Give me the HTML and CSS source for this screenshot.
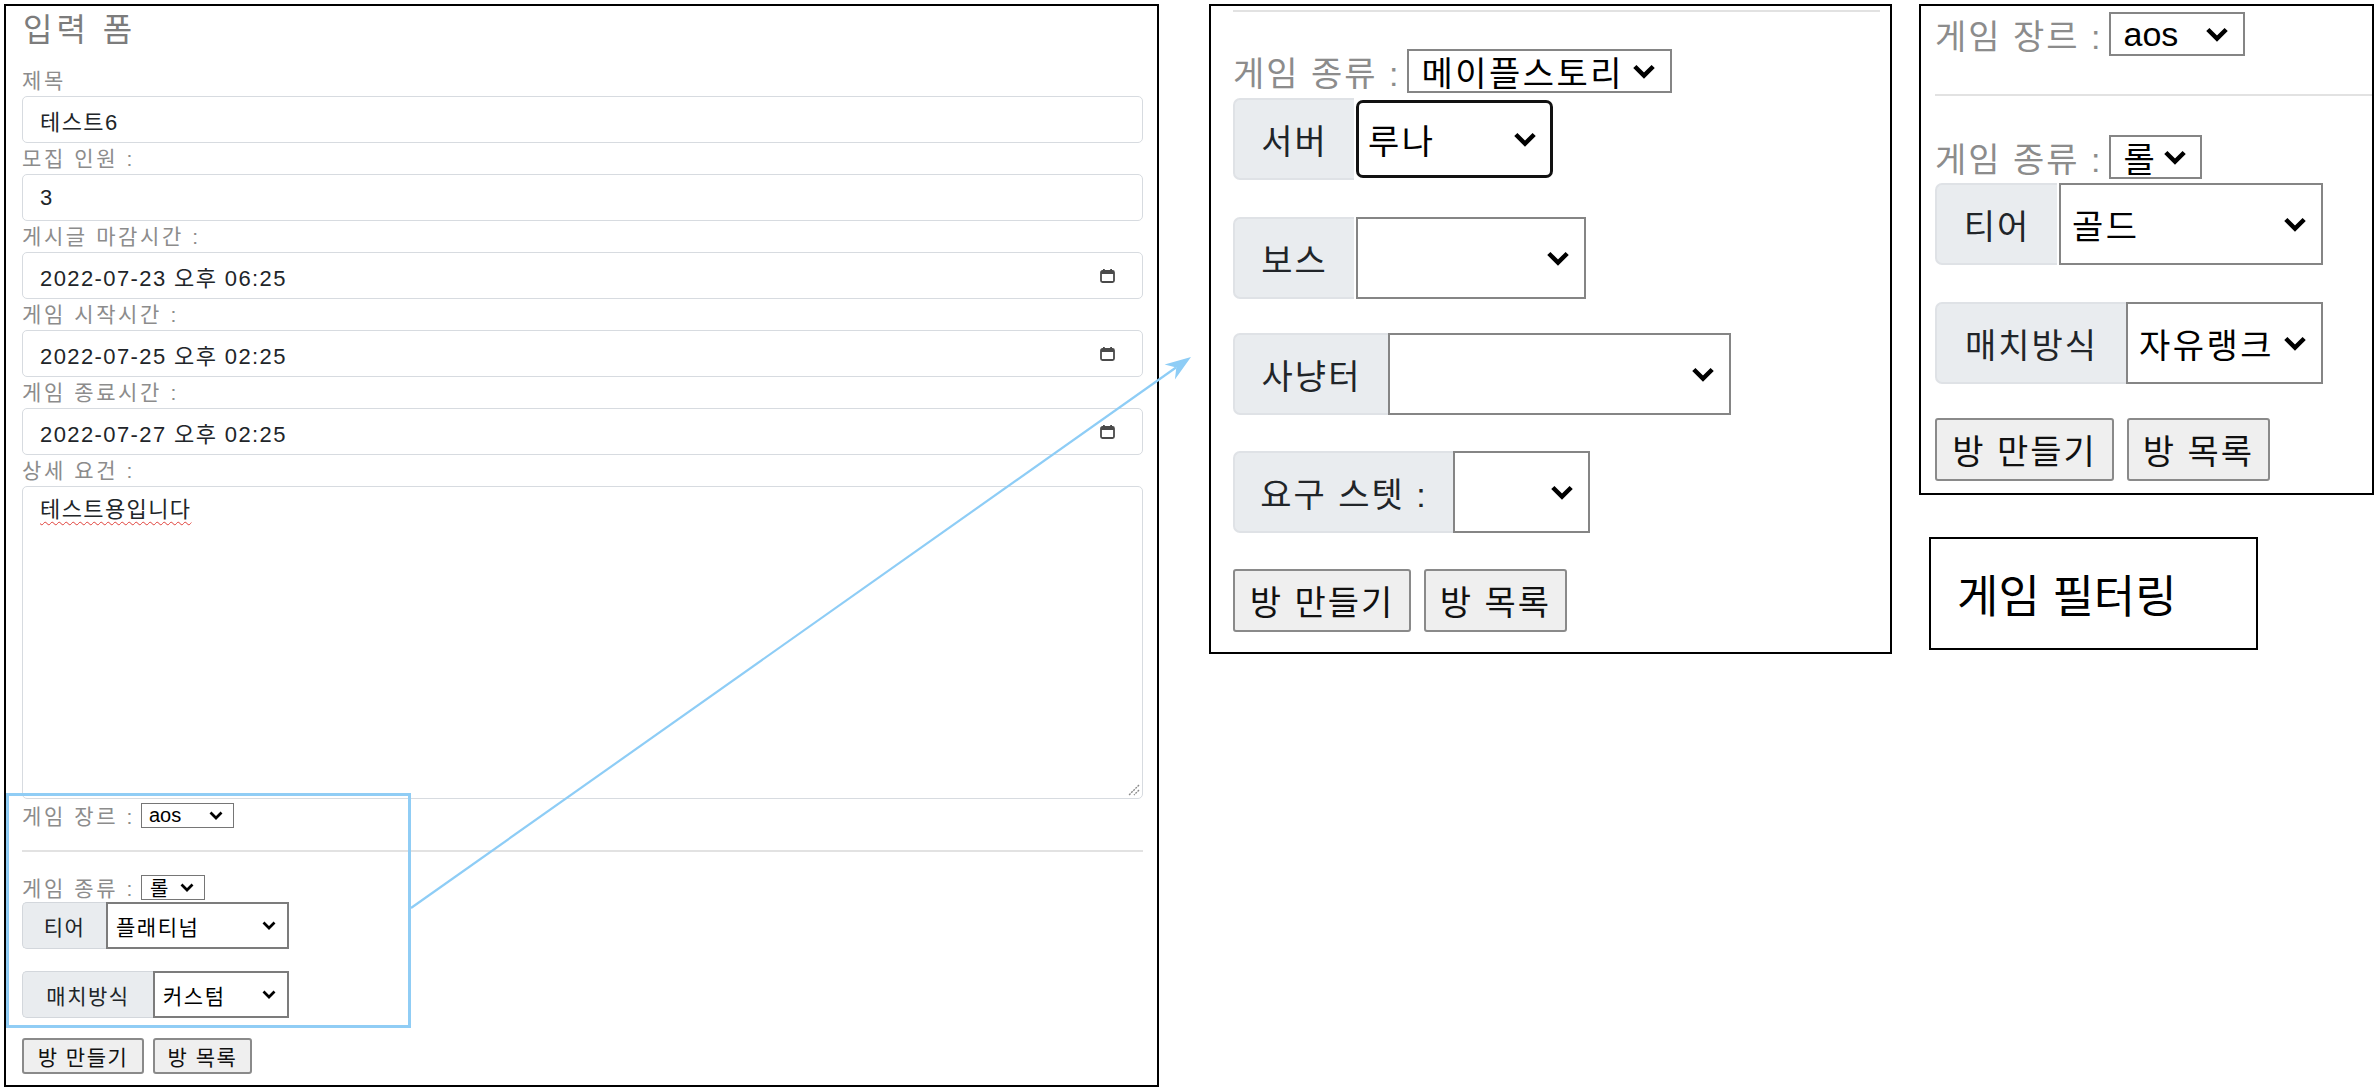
FILE: index.html
```html
<!DOCTYPE html>
<html lang="ko">
<head>
<meta charset="utf-8">
<title>입력 폼</title>
<link rel="stylesheet" href="styles.css">
</head>
<body>
<div class="page">
  <section class="panel form-panel">
    <h1 class="title">입력 폼</h1>
    <div class="field-label">제목</div>
    <div class="input">테스트6</div>
    <div class="field-label">모집 인원 :</div>
    <div class="input">3</div>
    <div class="field-label">게시글 마감시간 :</div>
    <div class="input date"><span>2022-07-23 오후 06:25</span><svg class="cal" viewBox="0 0 17 16"><rect x="2" y="3" width="13" height="11" rx="1.5" fill="none" stroke="#4a4a4a" stroke-width="1.8"/><rect x="2" y="3" width="13" height="3" fill="#4a4a4a"/><rect x="4" y="1" width="1.8" height="3" fill="#4a4a4a"/><rect x="11.2" y="1" width="1.8" height="3" fill="#4a4a4a"/></svg></div>
    <div class="field-label">게임 시작시간 :</div>
    <div class="input date"><span>2022-07-25 오후 02:25</span><svg class="cal" viewBox="0 0 17 16"><rect x="2" y="3" width="13" height="11" rx="1.5" fill="none" stroke="#4a4a4a" stroke-width="1.8"/><rect x="2" y="3" width="13" height="3" fill="#4a4a4a"/><rect x="4" y="1" width="1.8" height="3" fill="#4a4a4a"/><rect x="11.2" y="1" width="1.8" height="3" fill="#4a4a4a"/></svg></div>
    <div class="field-label">게임 종료시간 :</div>
    <div class="input date"><span>2022-07-27 오후 02:25</span><svg class="cal" viewBox="0 0 17 16"><rect x="2" y="3" width="13" height="11" rx="1.5" fill="none" stroke="#4a4a4a" stroke-width="1.8"/><rect x="2" y="3" width="13" height="3" fill="#4a4a4a"/><rect x="4" y="1" width="1.8" height="3" fill="#4a4a4a"/><rect x="11.2" y="1" width="1.8" height="3" fill="#4a4a4a"/></svg></div>
    <div class="field-label">상세 요건 :</div>
    <div class="textarea"><span class="misspelled">테스트용입니다</span><svg class="grip" viewBox="0 0 14 14"><path d="M13 3 L3 13 M13 8 L8 13" stroke="#8a8a8a" stroke-width="1.4" stroke-dasharray="2 1"/></svg></div>

    <div class="inline-row sm first">
      <span class="inline-label">게임 장르 :</span>
      <div class="sel s-aos"><span class="latin">aos</span><svg class="chev" viewBox="0 0 14 9"><path d="M1.5 1.5 L7 7 L12.5 1.5"/></svg></div>
    </div>
    <div class="divider sm"></div>
    <div class="inline-row sm">
      <span class="inline-label">게임 종류 :</span>
      <div class="sel s-lol"><span>롤</span><svg class="chev" viewBox="0 0 14 9"><path d="M1.5 1.5 L7 7 L12.5 1.5"/></svg></div>
    </div>
    <div class="group sm g-first">
      <div class="addon a-tier">티어</div>
      <div class="sel s-tier"><span>플래티넘</span><svg class="chev" viewBox="0 0 14 9"><path d="M1.5 1.5 L7 7 L12.5 1.5"/></svg></div>
    </div>
    <div class="group sm">
      <div class="addon a-match">매치방식</div>
      <div class="sel s-match"><span>커스텀</span><svg class="chev" viewBox="0 0 14 9"><path d="M1.5 1.5 L7 7 L12.5 1.5"/></svg></div>
    </div>
    <div class="btns sm">
      <button class="btn b-make">방 만들기</button>
      <button class="btn b-list">방 목록</button>
    </div>
  </section>

  <section class="panel maple-panel">
    <div class="divider lg"></div>
    <div class="inline-row lg r-kind">
      <span class="inline-label">게임 종류 :</span>
      <div class="sel s-maple"><span>메이플스토리</span><svg class="chev" viewBox="0 0 14 9"><path d="M1.5 1.5 L7 7 L12.5 1.5"/></svg></div>
    </div>
    <div class="group lg g-server">
      <div class="addon a-server">서버</div>
      <div class="sel focus s-server"><span>루나</span><svg class="chev" viewBox="0 0 14 9"><path d="M1.5 1.5 L7 7 L12.5 1.5"/></svg></div>
    </div>
    <div class="group lg g-boss">
      <div class="addon a-server">보스</div>
      <div class="sel s-boss"><span></span><svg class="chev" viewBox="0 0 14 9"><path d="M1.5 1.5 L7 7 L12.5 1.5"/></svg></div>
    </div>
    <div class="group lg g-hunt">
      <div class="addon a-hunt">사냥터</div>
      <div class="sel s-hunt"><span></span><svg class="chev" viewBox="0 0 14 9"><path d="M1.5 1.5 L7 7 L12.5 1.5"/></svg></div>
    </div>
    <div class="group lg g-stat">
      <div class="addon a-stat">요구 스텟 :</div>
      <div class="sel s-stat"><span></span><svg class="chev" viewBox="0 0 14 9"><path d="M1.5 1.5 L7 7 L12.5 1.5"/></svg></div>
    </div>
    <div class="btns lg b-maple">
      <button class="btn b-make">방 만들기</button>
      <button class="btn b-list">방 목록</button>
    </div>
  </section>

  <div class="right-col">
    <section class="panel lol-panel">
      <div class="inline-row lg r-genre">
        <span class="inline-label">게임 장르 :</span>
        <div class="sel s-aos"><span class="latin">aos</span><svg class="chev" viewBox="0 0 14 9"><path d="M1.5 1.5 L7 7 L12.5 1.5"/></svg></div>
      </div>
      <div class="divider lg d-lol"></div>
      <div class="inline-row lg r-lolkind">
        <span class="inline-label">게임 종류 :</span>
        <div class="sel s-lol"><span>롤</span><svg class="chev" viewBox="0 0 14 9"><path d="M1.5 1.5 L7 7 L12.5 1.5"/></svg></div>
      </div>
      <div class="group lg g-tier">
        <div class="addon a-tier">티어</div>
        <div class="sel s-tier"><span>골드</span><svg class="chev" viewBox="0 0 14 9"><path d="M1.5 1.5 L7 7 L12.5 1.5"/></svg></div>
      </div>
      <div class="group lg g-match">
        <div class="addon a-match">매치방식</div>
        <div class="sel s-match"><span>자유랭크</span><svg class="chev" viewBox="0 0 14 9"><path d="M1.5 1.5 L7 7 L12.5 1.5"/></svg></div>
      </div>
      <div class="btns lg b-lol">
        <button class="btn b-make">방 만들기</button>
        <button class="btn b-list">방 목록</button>
      </div>
    </section>
    <div class="note">게임 필터링</div>
  </div>

  <div class="highlight"></div>
  <svg class="arrow" viewBox="0 0 2380 1092">
    <line x1="411" y1="908" x2="1176" y2="367.5" stroke="#8ecdf6" stroke-width="2.2"/>
    <polygon points="1191,357 1174.9,379.4 1176.3,367.4 1164.6,364.6" fill="#8ecdf6"/>
  </svg>
</div>
</body>
</html>
```

FILE: styles.css
```css
html, body {
  margin: 0;
  background: #fff;
}
body {
  font-family: "Liberation Sans", "Noto Sans CJK KR", sans-serif;
  color: #212529;
}
.page {
  position: relative;
  width: 2380px;
  height: 1092px;
  box-sizing: border-box;
  padding: 4px 0 0 4px;
  display: flex;
  align-items: flex-start;
  overflow: hidden;
}
.panel {
  border: 2px solid #000;
  box-sizing: border-box;
  background: #fff;
}

/* ---------- left form panel ---------- */
.form-panel {
  width: 1155px;
  height: 1083px;
  padding: 0 14px 0 16px;
  margin-right: 50px;
  flex: none;
}
.title {
  margin: 0 0 11px 1px;
  height: 48px;
  line-height: 48px;
  font-size: 32px;
  font-weight: normal;
  letter-spacing: 4px;
  color: #7c7c7c;
}
.field-label {
  height: 31px;
  line-height: 31px;
  font-size: 21px;
  letter-spacing: 2.6px;
  color: #8c8c8c;
}
.input {
  height: 47px;
  box-sizing: border-box;
  border: 1px solid #d7dbe0;
  border-radius: 5px;
  padding: 0 17px;
  display: flex;
  align-items: center;
  justify-content: space-between;
  font-size: 22px;
  letter-spacing: 1.4px;
  color: #212529;
}
.input.date {
  padding-right: 26px;
}
.cal {
  width: 17px;
  height: 16px;
}
.textarea {
  position: relative;
  height: 313px;
  box-sizing: border-box;
  border: 1px solid #d7dbe0;
  border-radius: 5px;
  padding: 8px 17px;
  line-height: 30px;
  font-size: 22px;
  letter-spacing: 1.4px;
  color: #212529;
}
.misspelled {
  text-decoration: underline wavy #e0403a;
  text-decoration-thickness: 1px;
  text-underline-offset: 4px;
}
.grip {
  position: absolute;
  right: 2px;
  bottom: 2px;
  width: 14px;
  height: 14px;
}

/* ---------- shared controls ---------- */
.inline-row {
  display: flex;
  align-items: center;
}
.inline-label {
  color: #8c8c8c;
  white-space: nowrap;
}
.divider {
  background: #e2e2e2;
  height: 2px;
}
.sel {
  display: flex;
  align-items: center;
  justify-content: space-between;
  box-sizing: border-box;
  background: #fff;
  color: #000;
  white-space: nowrap;
  flex: none;
}
.sel .latin {
  letter-spacing: 0;
}
.chev path {
  fill: none;
  stroke: #000;
  stroke-width: 2.7;
  stroke-linejoin: miter;
  stroke-linecap: butt;
}
.group {
  display: flex;
  align-items: center;
}
.addon {
  display: flex;
  align-items: center;
  justify-content: center;
  box-sizing: border-box;
  background: #e9ecef;
  color: #212529;
  white-space: nowrap;
  flex: none;
}
.btns {
  display: flex;
}
.btn {
  font: inherit;
  box-sizing: border-box;
  background: #efefef;
  color: #111;
  border-style: solid;
  border-color: #8a8a8a;
  padding: 0;
  white-space: nowrap;
}

/* ---------- small (left panel) ---------- */
.inline-row.sm {
  height: 26px;
  margin-top: 22px;
  gap: 6px;
  font-size: 21px;
  letter-spacing: 2.6px;
}
.inline-row.sm.first {
  margin-top: 3px;
}
.divider.sm {
  margin-top: 22px;
}
.sm .sel {
  height: 25px;
  border: 1px solid #767676;
  padding: 0 10px 0 7px;
  font-size: 20px;
  letter-spacing: 0.5px;
}
.sm .chev {
  width: 14px;
  height: 9px;
}
.sm .s-aos { width: 93px; }
.sm .s-lol { width: 64px; padding-left: 8px; }
.group.sm {
  height: 47px;
  margin-top: 22px;
  font-size: 21px;
  letter-spacing: 1.5px;
}
.group.sm.g-first { margin-top: 2px; }
.group.sm .addon {
  height: 47px;
  border: 1px solid #d3d7dc;
  border-right: 0;
  border-radius: 5px 0 0 5px;
}
.group.sm .sel {
  height: 47px;
  border: 2px solid #7c7c7c;
  padding: 0 11px 0 8px;
  font-size: 21px;
  letter-spacing: 1.5px;
}
.sm .a-tier { width: 84px; }
.sm .s-tier { width: 183px; }
.sm .a-match { width: 131px; }
.sm .s-match { width: 136px; }
.btns.sm {
  margin-top: 20px;
  gap: 9px;
}
.sm .btn {
  height: 36px;
  border-width: 2px;
  border-radius: 3px;
  font-size: 21px;
  letter-spacing: 1.5px;
}
.sm .b-make { width: 122px; }
.sm .b-list { width: 99px; }

/* ---------- large (zoomed panels) ---------- */
.lg {
  font-size: 34px;
  letter-spacing: 2px;
}
.inline-row.lg {
  height: 44px;
  gap: 7px;
}
.lg .sel {
  height: 44px;
  border: 2px solid #858585;
  padding: 0 14px 0 12px;
  font-size: 34px;
  letter-spacing: 2.5px;
}
.lg .chev {
  width: 24px;
  height: 15px;
}
.group.lg {
  height: 82px;
}
.group.lg .addon {
  height: 82px;
  border: 2px solid #dfe2e6;
  border-right: 0;
  border-radius: 7px 0 0 7px;
  letter-spacing: 2px;
}
.group.lg .sel {
  height: 82px;
  padding-left: 11px;
}
.group.lg .sel.focus {
  height: 78px;
  border: 3px solid #111;
  border-radius: 7px;
  margin-left: 2px;
  padding-left: 9px;
  padding-right: 13px;
}
.btns.lg {
  gap: 13px;
}
.lg .btn {
  height: 63px;
  border-width: 2px;
  border-radius: 3px;
  font-size: 34px;
  letter-spacing: 2px;
}
.lg .b-make { width: 178px; }
.lg .b-list { width: 143px; }

/* middle panel */
.maple-panel {
  width: 683px;
  height: 650px;
  padding: 4px 10px 0 22px;
  margin-right: 27px;
  flex: none;
}
.r-kind { margin-top: 37px; }
.s-maple { width: 265px; }
.g-server { margin-top: 5px; }
.a-server { width: 121px; }
.s-server { width: 197px; }
.g-boss { margin-top: 37px; }
.group.lg .s-boss { width: 230px; margin-left: 2px; }
.g-hunt { margin-top: 34px; }
.a-hunt { width: 155px; }
.s-hunt { width: 343px; }
.g-stat { margin-top: 36px; }
.a-stat { width: 220px; }
.s-stat { width: 137px; }
.b-maple { margin-top: 36px; }

/* right column */
.right-col {
  display: flex;
  flex-direction: column;
  align-items: flex-start;
  flex: none;
}
.lol-panel {
  width: 455px;
  height: 491px;
  padding: 6px 0 0 14px;
}
.lg .s-aos { width: 136px; }
.lg .s-lol { width: 93px; padding-right: 13px; }
.d-lol { margin-top: 38px; }
.r-lolkind { margin-top: 39px; }
.g-tier { margin-top: 4px; }
.lg .a-tier { width: 122px; }
.group.lg .s-tier { width: 264px; margin-left: 2px; }
.g-match { margin-top: 37px; }
.lg .a-match { width: 191px; }
.lg .s-match { width: 197px; }
.b-lol { margin-top: 34px; gap: 12px; }
.b-lol .b-make { width: 179px; }

.note {
  margin: 42px 0 0 10px;
  width: 329px;
  height: 113px;
  box-sizing: border-box;
  border: 2px solid #000;
  padding-left: 26px;
  display: flex;
  align-items: center;
  font-family: "Noto Sans CJK KR", sans-serif;
  font-size: 45px;
  color: #000;
}

/* annotation overlays */
.highlight {
  position: absolute;
  left: 6px;
  top: 793px;
  width: 405px;
  height: 235px;
  box-sizing: border-box;
  border: 3px solid #90cdf5;
  pointer-events: none;
}
.arrow {
  position: absolute;
  left: 0;
  top: 0;
  width: 2380px;
  height: 1092px;
  pointer-events: none;
}
```
